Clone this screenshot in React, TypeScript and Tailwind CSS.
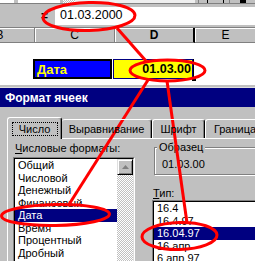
const typeItems = ['16.4', '16.4.97', '16.04.97', '16 апр', '6 апр 97'];
const formatItems = ['Общий', 'Числовой', 'Денежный', 'Финансовый', 'Дата', 'Время', 'Процентный', 'Дробный'];

function SunkenList({ items, selected, withScroll, className }: { items: string[]; selected: string; withScroll?: boolean; className: string }) {
  return (
    <div className={`border border-t-[#808080] border-l-[#808080] border-b-white border-r-white ${className}`}>
      <div className="h-full border border-t-black border-l-black border-b-[#dfdfdf] border-r-[#dfdfdf] flex">
        <div className="flex-1 bg-white">
          {items.map((it) => (
            <div
              key={it}
              className={`h-[12.5px] leading-[12.5px] pl-[3px] text-[11px] whitespace-nowrap ${
                it === selected ? 'bg-[#000080] text-white' : 'text-black'
              }`}
            >
              {it}
            </div>
          ))}
        </div>
        {withScroll && (
          <div className="w-[16px] flex flex-col bg-[repeating-conic-gradient(#c0c0c0_0%_25%,#ffffff_0%_50%)] bg-[length:2px_2px]">
            {/* up button */}
            <div className="h-[16px] bg-[#c0c0c0] border border-t-[#dfdfdf] border-l-[#dfdfdf] border-b-black border-r-black shadow-[inset_1px_1px_0_#fff,inset_-1px_-1px_0_#808080] flex items-center justify-center">
              <svg width="7" height="4" viewBox="0 0 7 4">
                <path d="M3.5 0L7 4H0z" fill="#808080" />
              </svg>
            </div>
          </div>
        )}
      </div>
    </div>
  );
}

export default function App() {
  return (
    <div className="relative w-[255px] h-[261px] overflow-hidden bg-white text-black font-['Liberation_Sans',Arial,sans-serif]">
      {/* toolbar remnant */}
      <div className="h-[4px] flex bg-[#c0c0c0] border-b border-[#808080]">
        <div className="w-[14px] bg-white" />
        <div className="w-[4px]" />
        <div className="w-[42px] bg-white" />
        <div className="w-[3px]" />
        <div className="w-[12px] bg-[repeating-conic-gradient(#c0c0c0_0%_25%,#ffffff_0%_50%)] bg-[length:2px_2px]" />
        <div className="w-[120px] bg-[#efefef]" />
        <div className="w-[4px] border-r border-[#808080]" />
        <div className="w-[8px]" />
        <div className="w-[17px] border-x border-black" />
        <div className="w-[6px] border-r border-[#808080]" />
        <div className="w-[10px]" />
        <div className="w-[6px] bg-black" />
      </div>

      {/* formula bar */}
      <div className="h-[23px] flex items-center bg-[#c0c0c0]">
        <div className="w-[55px] shrink-0 flex justify-end pr-[7px] text-[12px] font-bold leading-none">=</div>
        <div className="flex-1 h-[18px] bg-white flex items-center pl-[5px] text-[12.5px] leading-none">01.03.2000</div>
      </div>

      {/* column headers */}
      <div className="h-[16px] flex border-t border-[#808080] text-[12px] leading-none">
        <div className="-ml-[35px] w-[70px] shrink-0 bg-[#c0c0c0] border-r border-b border-[#808080] shadow-[inset_1px_1px_0_#fff] flex items-center justify-center">B</div>
        <div className="w-[80px] shrink-0 bg-[#c0c0c0] border-r border-b border-[#808080] shadow-[inset_1px_1px_0_#fff] flex items-center justify-center">C</div>
        <div className="w-[80px] shrink-0 bg-[#c0c0c0] border-r-2 border-b border-r-black border-b-[#808080] shadow-[inset_1px_1px_0_#fff] flex items-center justify-center font-bold">D</div>
        <div className="w-[62px] shrink-0 bg-[#c0c0c0] border-r border-b border-[#808080] shadow-[inset_1px_1px_0_#fff] flex items-center justify-center">E</div>
      </div>

      {/* cells */}
      <div className="h-[42px] bg-white pt-[16px] flex">
        <div className="ml-[33px] w-[79px] h-[20px] border-2 border-black bg-[#0000ff] text-[#ffff00] font-bold text-[13px] pl-[2px] flex items-center leading-none">
          Дата
        </div>
        <div className="relative w-[82px] h-[20px] flex pl-[1px]">
          <div className="flex-1 bg-[#ffff00] border border-[#000080] flex items-center justify-end pr-[1px] font-bold text-[12.5px] leading-none">
            01.03.00
          </div>
          <div className="w-[1px] bg-black" />
          <div className="absolute right-[-2px] bottom-[-2px] w-[4px] h-[4px] bg-black" />
        </div>
      </div>

      <div className="h-[2px] bg-[#c0c0c0]" />
      <div className="h-[1px] bg-[#dfdfdf]" />

      {/* dialog title */}
      <div className="h-[19px] bg-[#000080] text-white font-bold text-[12px] pl-[5px] flex items-center leading-none">
        Формат ячеек
      </div>

      {/* dialog body */}
      <div className="h-[154px] bg-[#c0c0c0] pt-[10px] text-[11px] leading-[12px]">
        {/* tabs */}
        <div className="relative z-10 h-[22px] flex items-end pl-[7px]">
          <div className="w-[55px] h-[22px] shrink-0 bg-[#c0c0c0] rounded-t-[3px] border-t border-l border-r border-t-white border-l-white border-r-black shadow-[inset_-1px_0_0_#808080] flex items-center justify-center">
            <span className="w-[46px] h-[14px] border border-dotted border-black flex items-center justify-center">Число</span>
          </div>
          <div className="w-[90px] h-[19px] mb-[1px] shrink-0 rounded-t-[3px] border-t border-r border-t-white border-r-black shadow-[inset_-1px_0_0_#808080] flex items-center justify-center">
            Выравнивание
          </div>
          <div className="w-[53px] h-[19px] mb-[1px] shrink-0 rounded-t-[3px] border-t border-l border-r border-t-white border-l-white border-r-black shadow-[inset_-1px_0_0_#808080] flex items-center justify-center">
            Шрифт
          </div>
          <div className="w-[60px] h-[19px] mb-[1px] shrink-0 rounded-t-[3px] border-t border-l border-r border-t-white border-l-white border-r-black shadow-[inset_-1px_0_0_#808080] flex items-center justify-center">
            Граница
          </div>
        </div>

        {/* panel */}
        <div className="-mt-px ml-[7px] h-[140px] border-t border-l border-white flex">
          <div className="w-[127px] shrink-0 pl-[5px] pt-[3px]">
            <div className="pl-[2px] h-[12px] whitespace-nowrap">
              <span className="underline">Ч</span>исловые форматы:
            </div>
            <SunkenList items={formatItems} selected="Дата" withScroll className="mt-[3px] w-[122px] h-[110px]" />
          </div>

          <div className="ml-[17px] w-[120px] shrink-0 pt-[2px]">
            <fieldset className="ml-[2px] h-[34px] border border-[#808080] shadow-[inset_1px_1px_0_#fff,1px_1px_0_#fff]">
              <legend className="ml-[2px] px-[2px] bg-[#c0c0c0]">Образец</legend>
              <div className="pl-[7px] pt-[5px] leading-[12px]">01.03.00</div>
            </fieldset>
            <div className="mt-[12px] pl-[1px] h-[12px]">
              <span className="underline">Т</span>ип:
            </div>
            <SunkenList items={typeItems} selected="16.04.97" className="mt-[1px] w-[120px] h-[70px]" />
          </div>
        </div>
      </div>

      {/* red annotations */}
      <svg className="absolute inset-0 pointer-events-none" width="255" height="261" viewBox="0 0 255 261">
        <g fill="none" stroke="#ff0000" strokeWidth="3">
          <ellipse cx="89" cy="16.5" rx="46" ry="14" transform="rotate(-1.5 89 16.5)" />
          <ellipse cx="167.5" cy="70.5" rx="37.5" ry="10.5" />
          <ellipse cx="55.5" cy="215" rx="54" ry="10.5" transform="rotate(-1 55.5 215)" />
          <ellipse cx="179.5" cy="236" rx="37.5" ry="13.5" transform="rotate(-1.5 179.5 236)" />
          <line x1="117" y1="28" x2="146" y2="61" />
          <line x1="148" y1="80" x2="68" y2="206" />
          <line x1="167" y1="81" x2="187" y2="223" />
        </g>
      </svg>
    </div>
  );
}
